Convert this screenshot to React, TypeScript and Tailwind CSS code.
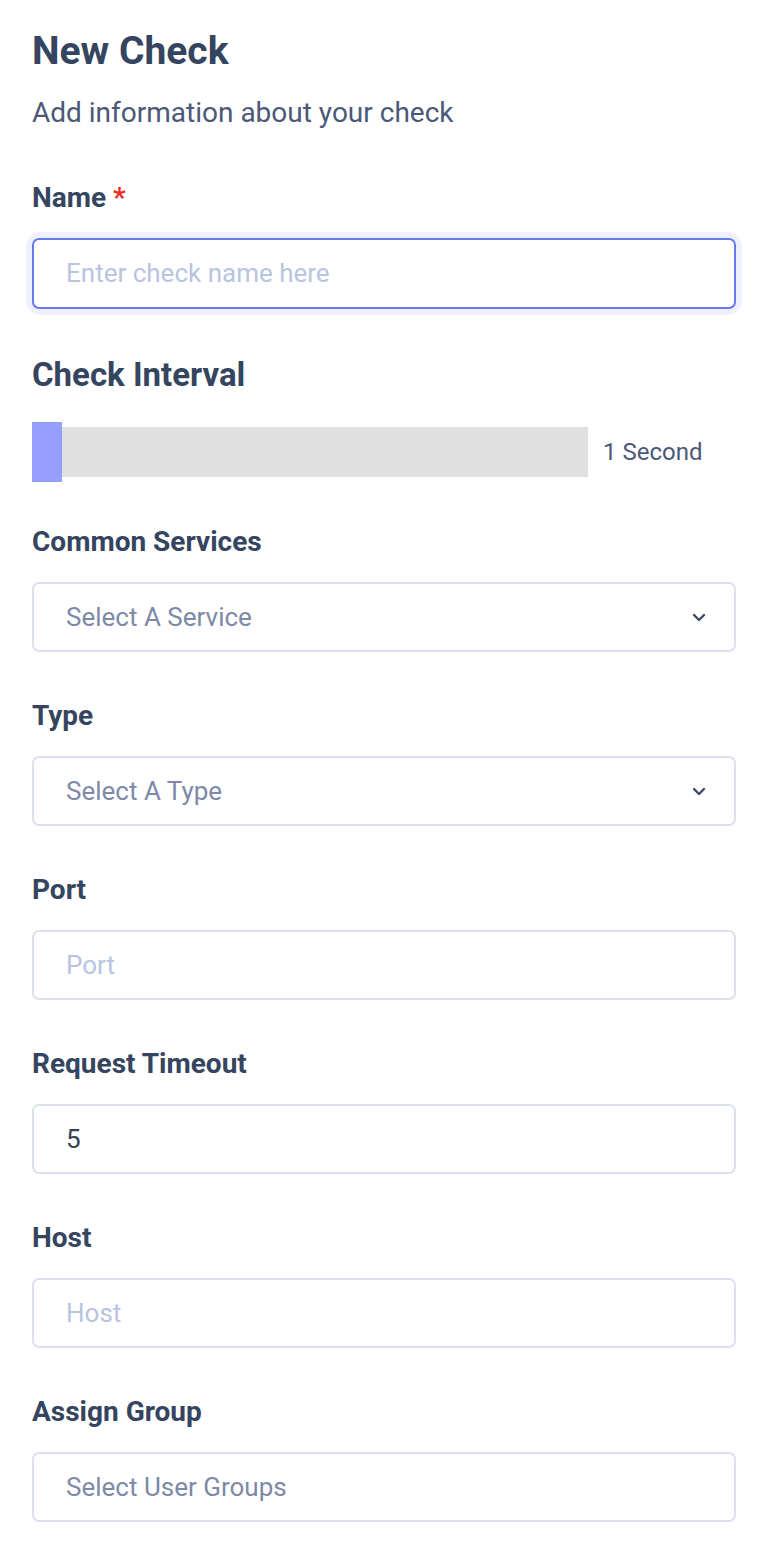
import React from "react";

const font = { fontFamily: "Roboto, 'Liberation Sans', sans-serif" };

function Chevron() {
  return (
    <svg width="14" height="9" viewBox="0 0 14 9" className="shrink-0">
      <path d="M2 2 L7 7 L12 2" fill="none" stroke="#3e4a66" strokeWidth="2.4" strokeLinecap="round" strokeLinejoin="round" />
    </svg>
  );
}

function Label({ children }: { children: React.ReactNode }) {
  return <div className="text-[28px] leading-[32px] font-bold text-[#354560]">{children}</div>;
}

function Field({ label, children }: { label: React.ReactNode; children: React.ReactNode }) {
  return (
    <div className="mt-[48px]">
      <Label>{label}</Label>
      <div className="mt-[24px]">{children}</div>
    </div>
  );
}

function Box({ text, kind, chevron }: { text: string; kind: "ph" | "sel" | "val"; chevron?: boolean }) {
  const color = kind === "ph" ? "text-[#b8c4e0]" : kind === "sel" ? "text-[#7d89a6]" : "text-[#374151]";
  return (
    <div className="h-[70px] rounded-[7px] border-2 border-[#dde0ee] bg-white flex items-center pl-[32px] pr-[28px]">
      <span className={`flex-1 text-[26px] ${color}`}>{text}</span>
      {chevron && <Chevron />}
    </div>
  );
}

export default function App() {
  return (
    <div className="w-[770px] min-h-[1546px] bg-white pl-[32px] pr-[34px] pt-[29px]" style={font}>
      <h1 className="text-[39px] leading-[44px] font-bold text-[#354560]">New Check</h1>
      <p className="mt-[24px] text-[28px] leading-[32px] text-[#4b5878]">Add information about your check</p>

      <div className="mt-[53px]">
        <Label>
          Name <span className="text-[#ee2b1f]">*</span>
        </Label>
        <div className="mt-[24px] rounded-[9px] shadow-[0_0_0_6px_#eef0fd]">
          <div className="h-[71px] rounded-[7px] border-2 border-[#6a78f0] bg-white flex items-center pl-[32px]">
            <span className="text-[26px] text-[#b8c4e0]">Enter check name here</span>
          </div>
        </div>
      </div>

      <h2 className="mt-[46px] text-[33px] leading-[40px] font-bold text-[#354560]">Check Interval</h2>
      <div className="mt-[27px] flex items-center">
        <div className="w-[556px] flex items-center">
          <div className="w-[30px] h-[60px] bg-[#979ffc]" />
          <div className="flex-1 h-[50px] bg-[#e0e0e0]" />
        </div>
        <span className="ml-[15px] text-[24px] text-[#4b5878]">1 Second</span>
      </div>

      <div className="mt-[44px]">
        <Label>Common Services</Label>
        <div className="mt-[24px]">
          <Box text="Select A Service" kind="sel" chevron />
        </div>
      </div>

      <Field label="Type">
        <Box text="Select A Type" kind="sel" chevron />
      </Field>
      <Field label="Port">
        <Box text="Port" kind="ph" />
      </Field>
      <Field label="Request Timeout">
        <Box text="5" kind="val" />
      </Field>
      <Field label="Host">
        <Box text="Host" kind="ph" />
      </Field>
      <Field label="Assign Group">
        <Box text="Select User Groups" kind="sel" />
      </Field>
    </div>
  );
}
